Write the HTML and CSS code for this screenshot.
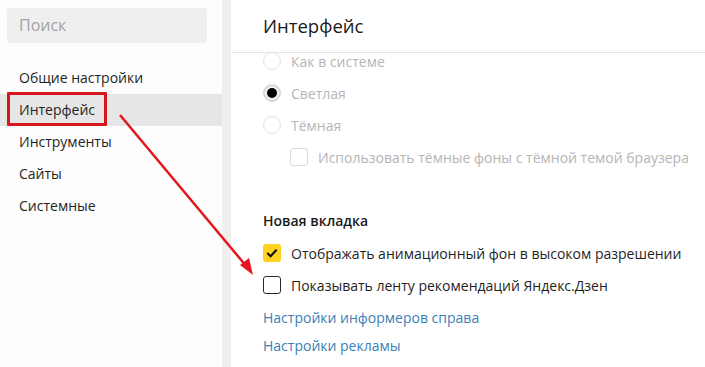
FILE: index.html
```html
<!DOCTYPE html>
<html lang="ru">
<head>
<meta charset="utf-8">
<link rel="stylesheet" href="styles.css">
</head>
<body>
<div class="page">
  <aside class="sidebar">
    <div class="search">Поиск</div>
    <nav class="nav">
      <div class="nav-item">Общие настройки</div>
      <div class="nav-item active">Интерфейс</div>
      <div class="nav-item">Инструменты</div>
      <div class="nav-item">Сайты</div>
      <div class="nav-item">Системные</div>
    </nav>
  </aside>
  <div class="gutter"></div>
  <main class="main">
    <header class="header">Интерфейс</header>
    <div class="scroll">
      <div class="content">
        <div class="row disabled"><span class="radio"></span><span>Как в системе</span></div>
        <div class="row disabled"><span class="radio checked"></span><span>Светлая</span></div>
        <div class="row disabled"><span class="radio"></span><span>Тёмная</span></div>
        <div class="row disabled sub"><span class="box light"></span><span>Использовать тёмные фоны с тёмной темой браузера</span></div>
        <div class="section-title">Новая вкладка</div>
        <div class="row"><span class="box on"><svg width="14" height="14" viewBox="0 0 14 14"><path d="M2.3 7 L5.6 10.2 L11.6 3.8" fill="none" stroke="#111" stroke-width="2.2"/></svg></span><span>Отображать анимационный фон в высоком разрешении</span></div>
        <div class="row"><span class="box"></span><span>Показывать ленту рекомендаций Яндекс.Дзен</span></div>
        <a class="link first">Настройки информеров справа</a>
        <a class="link">Настройки рекламы</a>
      </div>
    </div>
  </main>
  <div class="highlight"></div>
  <svg class="arrow" width="705" height="367" viewBox="0 0 705 367">
    <line x1="120" y1="115" x2="247" y2="267" stroke="#e3161e" stroke-width="2.5"/>
    <path d="M253 275 L240 265 L249 258 Z" fill="#e3161e"/>
  </svg>
</div>
</body>
</html>
```
FILE: styles.css
```css
* { box-sizing: border-box; }
html, body { margin: 0; padding: 0; }
body {
  font-family: "Open Sans", "Noto Sans", sans-serif;
  font-size: 14px;
  color: #1f1f1f;
  background: #fff;
}
.page {
  position: relative;
  width: 705px;
  height: 367px;
  display: flex;
  overflow: hidden;
}
.sidebar {
  width: 222px;
  background: #fdfdfd;
  padding-top: 8px;
}
.search {
  margin: 0 15px 0 7px;
  height: 35px;
  line-height: 35px;
  background: #efefef;
  border-radius: 3px;
  padding-left: 12px;
  color: #a3a3a3;
  font-size: 16px;
}
.nav { margin-top: 19px; }
.nav-item {
  height: 32px;
  line-height: 32px;
  padding-left: 19px;
}
.nav-item.active { background: #e6e6e6; }
.gutter {
  width: 9px;
  background: #f1efee;
}
.main {
  flex: 1;
  display: flex;
  flex-direction: column;
  background: #fff;
}
.header {
  height: 53px;
  flex: none;
  border-bottom: 1px solid #e3e3e3;
  padding-left: 32px;
  line-height: 52px;
  font-size: 18.5px;
  color: #1a1a1a;
}
.scroll {
  flex: 1;
  overflow: hidden;
}
.content {
  margin-top: -8px;
  padding-left: 32px;
  display: flex;
  flex-direction: column;
}
.row {
  height: 32px;
  display: flex;
  align-items: center;
  gap: 10px;
}
.row.disabled { color: #b5b5b5; }
.row.sub { padding-left: 27px; }
.radio {
  width: 18px;
  height: 18px;
  border-radius: 50%;
  border: 1px solid #e2e2e2;
  display: flex;
  align-items: center;
  justify-content: center;
  flex: none;
}
.radio.checked {
  border: 2px solid #d8d8d8;
  background: #f2f2f2;
}
.radio.checked::after {
  content: "";
  width: 10px;
  height: 10px;
  border-radius: 50%;
  background: #000;
}
.box {
  width: 18px;
  height: 18px;
  border: 1.5px solid #2b2b2b;
  border-radius: 3px;
  flex: none;
  display: flex;
  align-items: center;
  justify-content: center;
}
.box.light { border: 1px solid #dcdcdc; }
.box.on {
  border: none;
  background: #ffd21f;
}
.section-title {
  margin-top: 32px;
  height: 32px;
  line-height: 32px;
  font-weight: 600;
  color: #1a1a1a;
}
.link {
  display: block;
  height: 28px;
  line-height: 28px;
  color: #3a7fb6;
}
.link.first { margin-top: 3px; }
.highlight {
  position: absolute;
  left: 7px;
  top: 92px;
  width: 100px;
  height: 34px;
  border: 3px solid #d9141c;
  border-radius: 1px;
}
.arrow {
  position: absolute;
  left: 0;
  top: 0;
  pointer-events: none;
}
```
